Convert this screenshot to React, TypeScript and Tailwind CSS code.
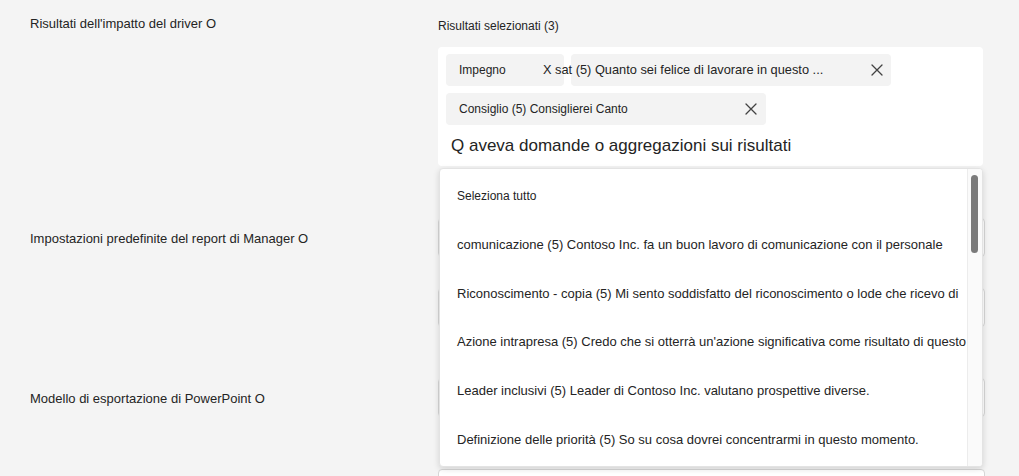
import React from 'react';

const font = { fontFamily: '"Liberation Sans", Arial, sans-serif' };

function CloseIcon() {
    return (
        <svg width="12" height="12" viewBox="0 0 12 12" className="shrink-0">
            <path d="M1 1 L11 11 M11 1 L1 11" stroke="#424242" strokeWidth="1.3" strokeLinecap="round" />
        </svg>
    );
}

const options = [
    'comunicazione (5) Contoso Inc. fa un buon lavoro di comunicazione con il personale',
    'Riconoscimento - copia (5) Mi sento soddisfatto del riconoscimento o lode che ricevo di',
    "Azione intrapresa (5) Credo che si otterrà un'azione significativa come risultato di questo",
    'Leader inclusivi (5) Leader di Contoso Inc. valutano prospettive diverse.',
    'Definizione delle priorità (5) So su cosa dovrei concentrarmi in questo momento.',
];

export default function App() {
    return (
        <div className="relative w-[1019px] h-[476px] overflow-hidden bg-[#f4f4f4] text-[#242424] pt-[16px]" style={font}>
            {/* row 1 */}
            <div className="flex">
                <div className="w-[438px] pl-[30px] text-[13px] leading-4">Risultati dell'impatto del driver O</div>
                <div className="w-[545px]">
                    <div className="mt-[2px] text-[12px] leading-4">Risultati selezionati (3)</div>
                    <div className="mt-[13px] bg-white rounded-[4px] pl-[8px] pt-[7px] pb-[8px]">
                        <div className="flex flex-wrap gap-[7px]">
                            <div className="w-[118px] h-[32px] rounded-[4px] bg-[#f3f3f3] flex items-center pl-[13px] text-[12px]">
                                Impegno
                            </div>
                            <div className="relative w-[320px] h-[32px] rounded-[4px] bg-[#f3f3f3] flex items-center justify-between pr-[8px] text-[12.8px]">
                                <span className="-ml-[28px] whitespace-nowrap">X sat (5) Quanto sei felice di lavorare in questo ...</span>
                                <CloseIcon />
                            </div>
                            <div className="w-[320px] h-[32px] rounded-[4px] bg-[#f3f3f3] flex items-center justify-between pl-[13px] pr-[9px] text-[12px]">
                                <span>Consiglio (5) Consiglierei Canto</span>
                                <CloseIcon />
                            </div>
                        </div>
                        <div className="mt-[9px] pl-[5px] text-[17px] leading-6">Q aveva domande o aggregazioni sui risultati</div>
                    </div>
                </div>
            </div>

            {/* row 2 */}
            <div className="flex items-center mt-[52px]">
                <div className="w-[438px] pl-[30px] pt-[3px] text-[13px] leading-4">Impostazioni predefinite del report di Manager O</div>
                <div className="w-[547px] h-[39px] bg-white border border-[#d6d6d6] rounded-[4px]" />
            </div>

            {/* row 3 */}
            <div className="flex items-center mt-[31px]">
                <div className="w-[438px]" />
                <div className="w-[547px] h-[39px] bg-white border border-[#d6d6d6] rounded-[4px]" />
            </div>

            {/* row 4 */}
            <div className="flex items-center mt-[51px]">
                <div className="w-[438px] pl-[30px] pt-[3px] text-[13px] leading-4">Modello di esportazione di PowerPoint O</div>
                <div className="w-[547px] h-[39px] bg-white border border-[#d6d6d6] rounded-[4px]" />
            </div>

            {/* row 5 */}
            <div className="flex items-center mt-[52px]">
                <div className="w-[438px]" />
                <div className="w-[547px] h-[39px] bg-white border border-[#d6d6d6] rounded-[4px]" />
            </div>

            {/* dropdown */}
            <div className="absolute left-[439px] top-[168px] w-[544px] h-[299px] bg-white rounded-[4px] border border-[#e3e3e3] shadow-[0_2px_6px_rgba(0,0,0,0.14)] overflow-hidden">
                <div className="w-[528px] overflow-hidden pt-[3px]">
                    <div className="h-[48.6px] flex items-center pl-[17px] text-[12px] whitespace-nowrap">Seleziona tutto</div>
                    {options.map((o) => (
                        <div key={o} className="h-[48.6px] flex items-center pl-[17px] text-[13px] whitespace-nowrap">
                            {o}
                        </div>
                    ))}
                </div>
                <div className="absolute right-0 top-0 bottom-0 w-[15px] bg-[#fafafa] border-l border-[#ececec]">
                    <div className="ml-[3px] mt-[6px] w-[7px] h-[78px] rounded-full bg-[#7a7a7a]" />
                </div>
            </div>
        </div>
    );
}
